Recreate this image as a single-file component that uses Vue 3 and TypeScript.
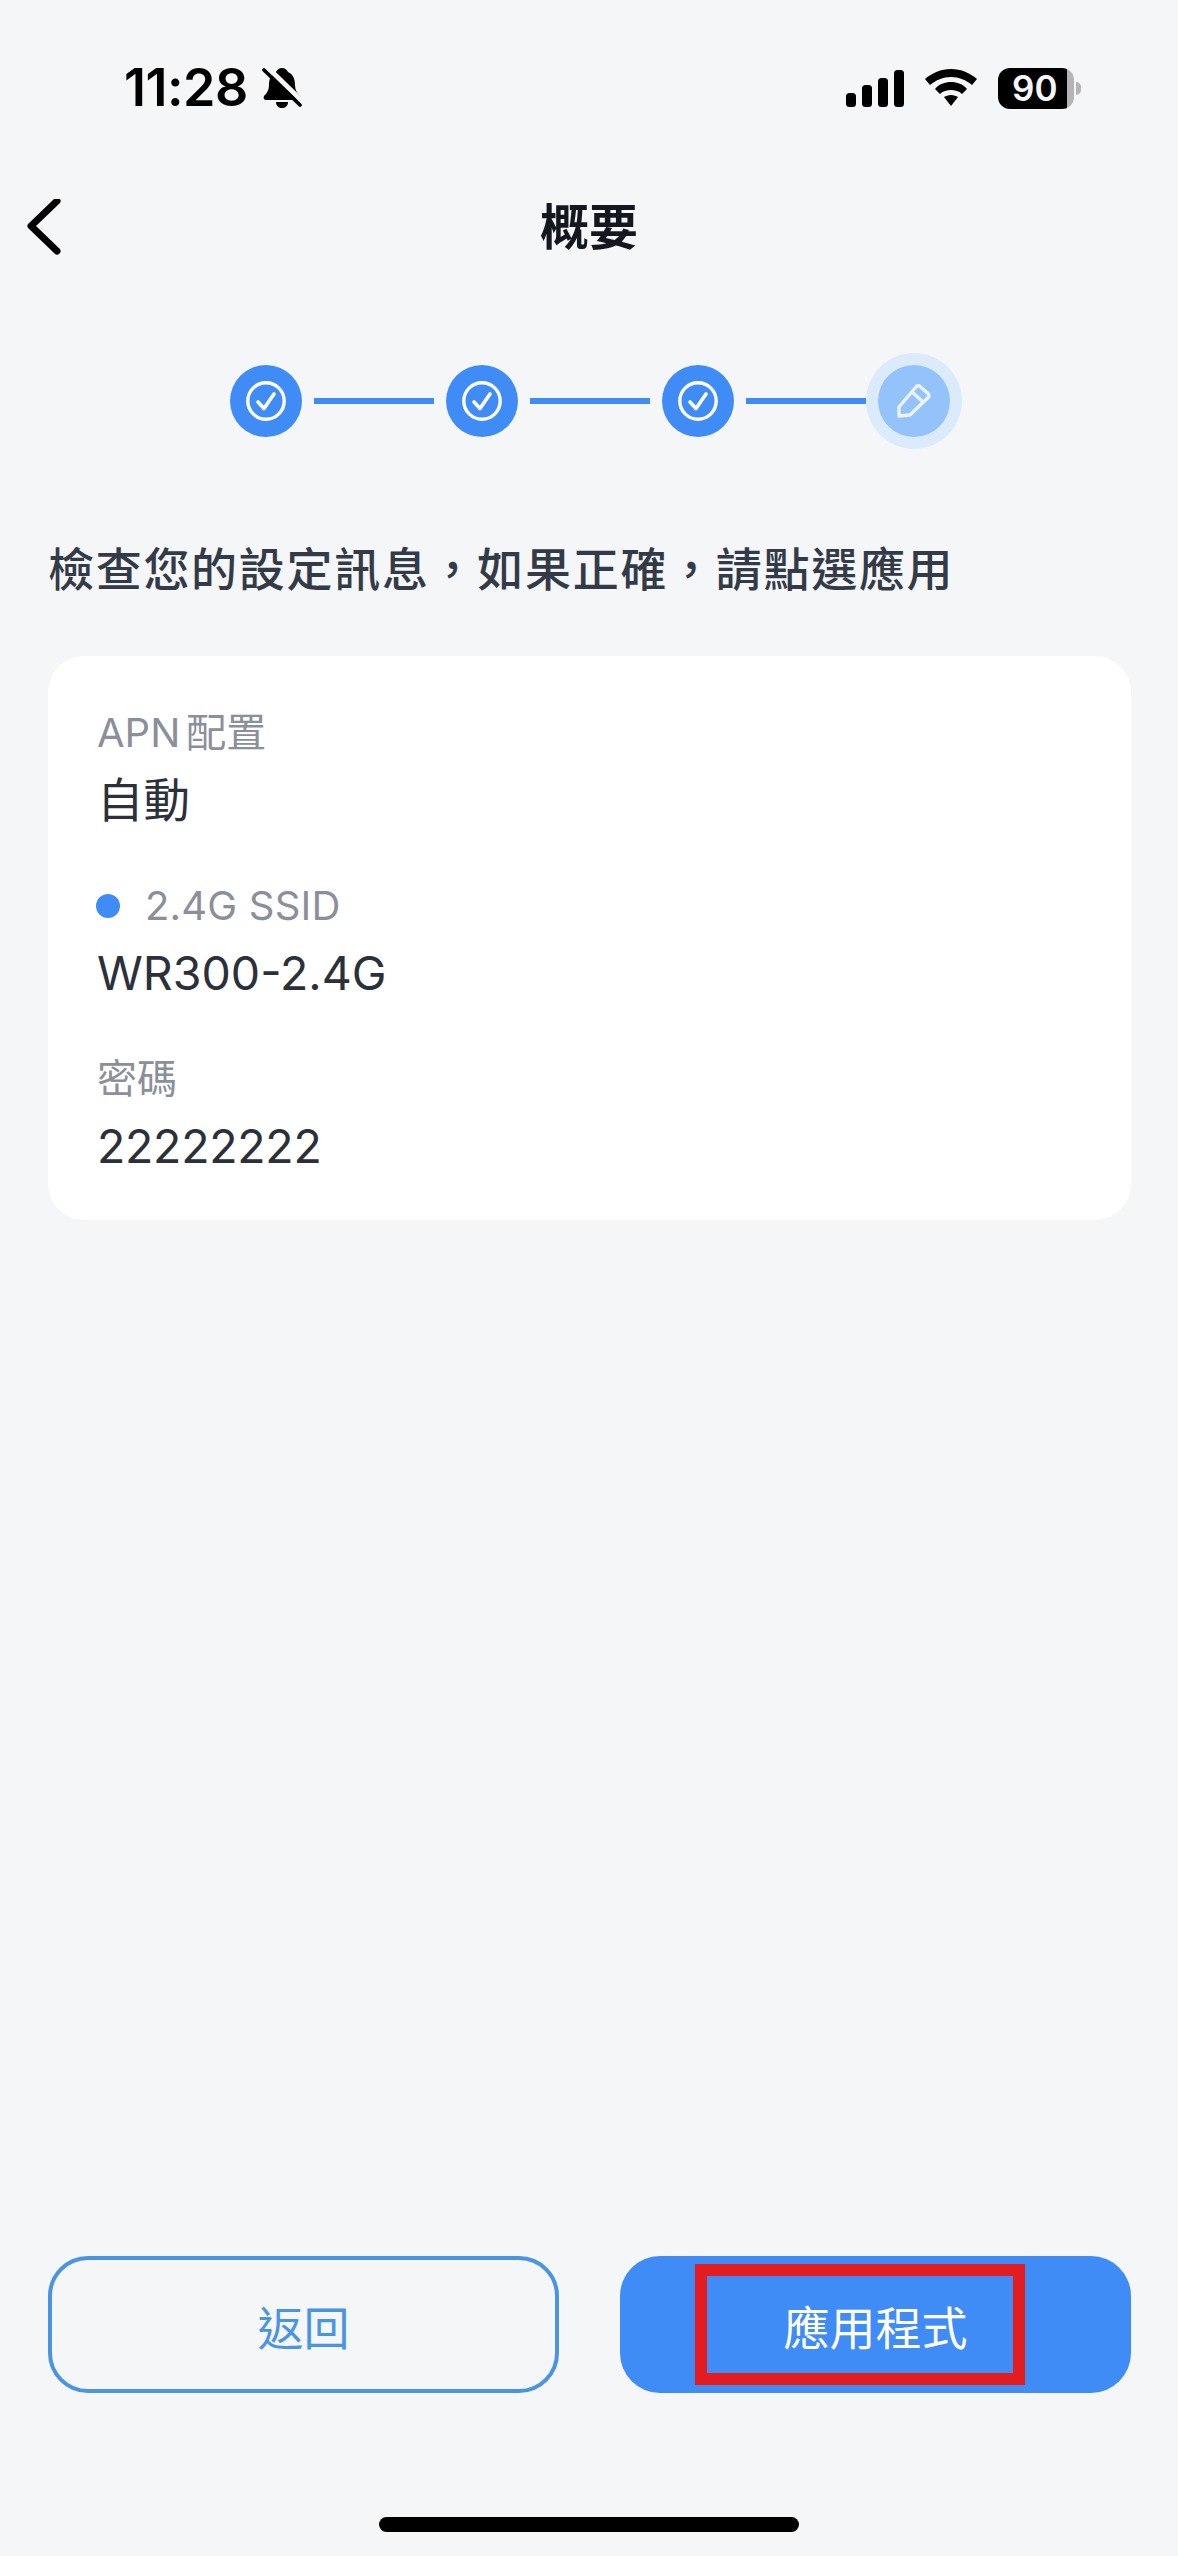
<script setup lang="ts">
const doneSteps: number[] = [1, 2, 3]
const signalBars = [
  { x: 0, y: 23, h: 14 },
  { x: 16, y: 15, h: 22 },
  { x: 32, y: 8, h: 29 },
  { x: 48, y: 0, h: 37 },
]
</script>

<template>
  <div class="page">
    <header class="status">
      <div class="status-left">
        <span class="time">11:28</span>
        <svg class="bell" width="40" height="42" viewBox="0 0 40 42">
          <path d="M20 1c3 0 5 2 6 4 5 2 7 7 7 13 0 5 2 8 5 11 1 2 0 4-2 4H4c-2 0-3-2-2-4 3-3 5-6 5-11 0-6 2-11 7-13 1-2 3-4 6-4z" fill="#000" />
          <path d="M14 35h12c0 4-3 6-6 6s-6-2-6-6z" fill="#000" />
          <path d="M3 -2L40 34" stroke="#f5f6f8" stroke-width="5" />
          <path d="M2 3L38 38" stroke="#000" stroke-width="3.6" stroke-linecap="round" />
        </svg>
      </div>
      <div class="status-right">
        <svg width="58" height="37" viewBox="0 0 58 37">
          <rect v-for="b in signalBars" :key="b.x" :x="b.x" :y="b.y" width="10" :height="b.h" rx="3.5" fill="#000" />
        </svg>
        <svg width="52" height="38" viewBox="0 0 52 38">
          <path d="M26 0c10 0 19 4 26 10l-5 6C41 11 34 8 26 8S11 11 5 16l-5-6C7 4 16 0 26 0z" fill="#000" />
          <path d="M26 13c6 0 12 2 16 7l-5 5c-3-3-7-4-11-4s-8 1-11 4l-5-5c4-5 10-7 16-7z" fill="#000" />
          <path d="M26 26c3 0 5 1 7 2L26 37l-7-9c2-1 4-2 7-2z" fill="#000" />
        </svg>
        <div class="battery">
          <div class="battery-body"><span class="battery-level">90</span></div>
          <div class="battery-nub"></div>
        </div>
      </div>
    </header>

    <nav class="nav">
      <svg class="back" width="36" height="58" viewBox="0 0 36 58">
        <path d="M31 2L5 27l26 25" fill="none" stroke="#000" stroke-width="7" stroke-linecap="round" stroke-linejoin="round" />
      </svg>
      <h1 class="title">概要</h1>
    </nav>

    <div class="stepper">
      <template v-for="s in doneSteps" :key="s">
        <div class="step">
          <svg width="40" height="40" viewBox="0 0 40 40">
            <circle cx="20" cy="20" r="18.2" fill="none" stroke="#fff" stroke-width="3.4" />
            <path d="M12 21l6 6.500L28 13" fill="none" stroke="#fff" stroke-width="3.6" stroke-linecap="round" stroke-linejoin="round" />
          </svg>
        </div>
        <div class="line"></div>
      </template>
      <div class="step current">
        <svg width="34" height="34" viewBox="0 0 34 34">
          <path d="M2 32V23L19 3c1-1.500 3-1.500 4-.5l8 7c1.200 1 1.200 3 .2 4L13 31z" fill="none" stroke="#eaf3fe" stroke-width="3.400" stroke-linejoin="round" />
          <path d="M15 8l11 10" fill="none" stroke="#eaf3fe" stroke-width="3.400" />
        </svg>
      </div>
    </div>

    <p class="heading">檢查您的設定訊息，如果正確，請點選應用</p>

    <section class="card">
      <div class="field">
        <div class="label">APN<span class="cjk-after">配置</span></div>
        <div class="value">自動</div>
      </div>
      <div class="field">
        <div class="label with-dot"><span class="dot"></span>2.4G SSID</div>
        <div class="value">WR300-2.4G</div>
      </div>
      <div class="field">
        <div class="label">密碼</div>
        <div class="value digits">22222222</div>
      </div>
    </section>

    <div class="spacer"></div>

    <footer class="actions">
      <button class="btn btn-outline" type="button">返回</button>
      <button class="btn btn-primary" type="button">
        應用程式
        <span class="highlight"></span>
      </button>
    </footer>

    <div class="home-wrap"><div class="home"></div></div>
  </div>
</template>

<style>
html, body { margin: 0; background: #f5f6f8; }
</style>

<style scoped>
.page {
  width: 1178px;
  height: 2556px;
  display: flex;
  flex-direction: column;
  background: #f5f6f8;
  font-family: Inter, "Noto Sans CJK TC", sans-serif;
  color: #2b303b;
  overflow: hidden;
}
.status {
  height: 44px;
  margin-top: 66px;
  padding: 0 97px 0 124px;
  display: flex;
  justify-content: space-between;
  align-items: center;
}
.status-left { display: flex; align-items: center; gap: 14px; }
.time { font-size: 52px; line-height: 44px; font-weight: 600; color: #000; letter-spacing: -0.5px; }
.status-right { display: flex; align-items: center; gap: 21px; }
.battery { display: flex; align-items: center; gap: 2px; }
.battery-body {
  width: 76px;
  height: 41px;
  border-radius: 12px;
  background: linear-gradient(90deg, #000 91%, #b4b4b6 91%);
  display: flex;
  align-items: center;
  padding-left: 14px;
  box-sizing: border-box;
}
.battery-level { color: #f5f6f8; font-size: 35px; line-height: 41px; font-weight: 600; }
.battery-nub {
  width: 5px;
  height: 13px;
  background: #b4b4b6;
  border-radius: 0 6px 6px 0;
}
.nav {
  margin-top: 88px;
  height: 60px;
  padding-left: 26px;
  display: flex;
  align-items: center;
  position: relative;
}
.title {
  position: absolute;
  left: 0;
  right: 0;
  top: 0;
  margin: 0;
  text-align: center;
  font-size: 49px;
  line-height: 60px;
  font-weight: 700;
  color: #14171d;
}
.stepper {
  margin-top: 107px;
  display: flex;
  justify-content: center;
  align-items: center;
  gap: 12px;
  padding-left: 2px;
}
.step {
  width: 72px;
  height: 72px;
  border-radius: 50%;
  background: #408cf7;
  display: flex;
  align-items: center;
  justify-content: center;
  flex: none;
}
.step.current {
  background: #93c3fa;
  box-shadow: 0 0 0 12px #dcebfc;
}
.line { width: 120px; height: 6px; background: #408cf7; flex: none; }
.heading {
  margin: 97px 0 0 48px;
  font-size: 46px;
  letter-spacing: 1.7px;
  line-height: 70px;
  font-weight: 500;
  color: #343b48;
}
.card {
  margin: 52px 47px 0 48px;
  height: 564px;
  box-sizing: border-box;
  padding: 50px 49px;
  background: #fff;
  border-radius: 36px;
  display: flex;
  flex-direction: column;
  gap: 51px;
}
.label {
  font-size: 40px;
  line-height: 54px;
  color: #8b8f9a;
}
.cjk-after { margin-left: 6px; }
.with-dot { display: flex; align-items: center; gap: 25px; letter-spacing: 0.2px; }
.dot { width: 24px; height: 24px; margin-left: -1px; border-radius: 50%; background: #408cf7; flex: none; }
.value {
  margin-top: 12px;
  font-size: 46.500px;
  line-height: 56px;
  color: #2b303b;
}
.digits { letter-spacing: -0.3px; }
.spacer { flex: 1; }
.actions {
  display: grid;
  grid-template-columns: 1fr 1fr;
  gap: 61px;
  padding: 0 47px 0 48px;
}
.btn {
  height: 137px;
  border-radius: 40px;
  font-family: inherit;
  font-size: 46px;
  box-sizing: border-box;
  display: flex;
  align-items: center;
  justify-content: center;
  padding: 0;
}
.btn-outline { background: transparent; border: 4px solid #4a95e2; color: #4a95e2; }
.btn-primary { background: #408cf7; border: 0; color: #fff; position: relative; }
.highlight {
  position: absolute;
  left: 75px;
  top: 8px;
  width: 330px;
  height: 121px;
  box-sizing: border-box;
  border: 12px solid #e31c1f;
}
.home-wrap {
  height: 163px;
  display: flex;
  justify-content: center;
  padding-top: 124px;
  box-sizing: border-box;
}
.home { width: 420px; height: 15px; border-radius: 8px; background: #000; }
</style>
